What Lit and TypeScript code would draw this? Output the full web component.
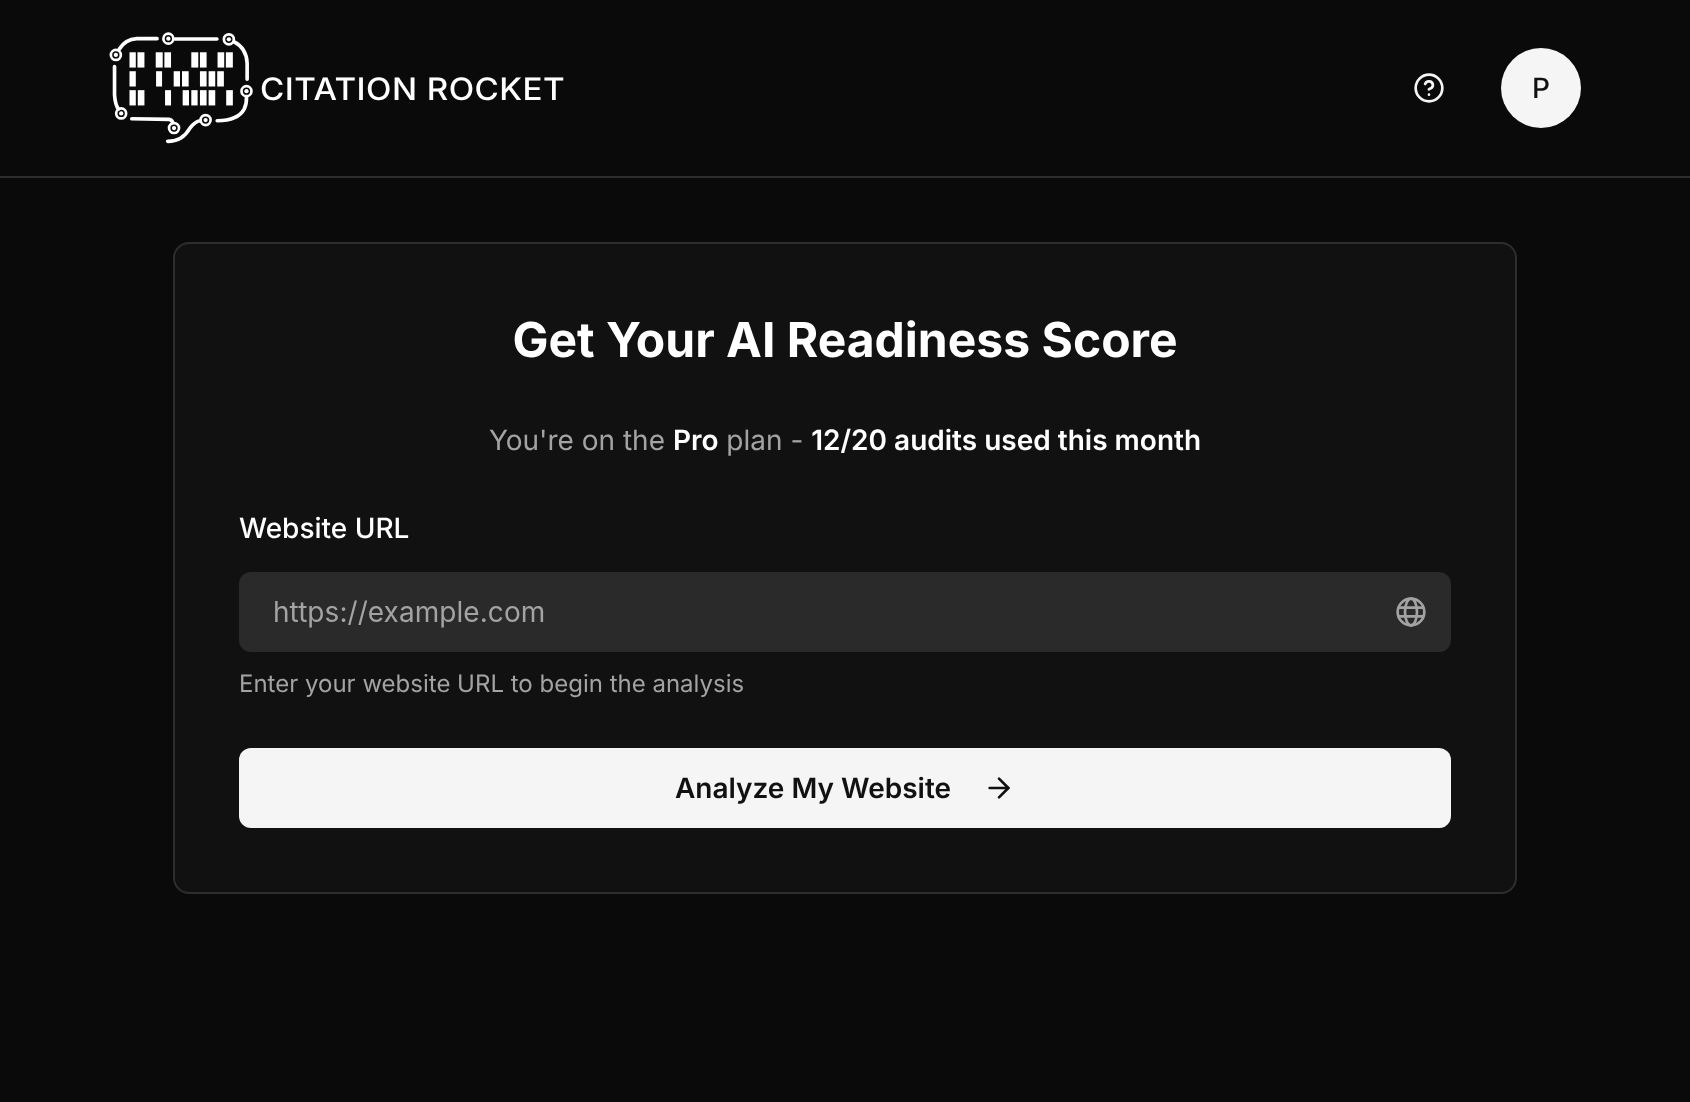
import { LitElement, html, css, svg } from "lit";
import { customElement } from "lit/decorators.js";

const bars: [number, number, number][] = [
  [103,122,97],[127,148,97],[182,203,97],[208,228,97],[289,310,97],[315,335,97],[368,388,97],[393,414,97],
  [103,122,154],[183,201,154],[236,255,154],[261,281,154],[315,335,154],[341,361,154],[367,387,154],
  [103,122,211],[128,148,211],[210,228,211],[263,282,211],[289,308,211],[315,335,211],[341,361,211],[394,414,211],
];
const nodes = [[62,105],[220,56],[402,58],[455,214],[332,301],[237,325],[78,281]];

@customElement("app-root")
export class AppRoot extends LitElement {
  static styles = css`
    :host { display: block; min-height: 1102px; background: #0a0a0a; color: #fff; font-family: Inter, "Liberation Sans", sans-serif; text-rendering: geometricPrecision; }
    header { height: 176px; border-bottom: 2px solid #2e2e2e; display: flex; align-items: center; justify-content: space-between; padding: 0 109px; }
    .brand { display: flex; align-items: center; gap: 7px; will-change: transform; }
    .brand svg { display: block; width: 144px; height: 113px; }
    .brand span { font-family: Inter, sans-serif; font-weight: 500; font-size: 31px; line-height: 40px; padding-top: 2px; letter-spacing: 0.4px; color: #fff; white-space: nowrap; transform: scaleX(1.07); transform-origin: left center; }
    .actions { display: flex; align-items: center; gap: 48px; will-change: transform; }
    .help { width: 48px; height: 48px; display: flex; align-items: center; justify-content: center; color: #f5f5f5; }
    .avatar { width: 80px; height: 80px; border-radius: 50%; background: #f5f5f5; color: #111; display: flex; align-items: center; justify-content: center; font-size: 28px; font-weight: 500; }
    main { display: flex; justify-content: center; padding-top: 64px; }
    .card { box-sizing: border-box; width: 1344px; border: 2px solid #2e2e2e; border-radius: 16px; background: #111; padding: 64px; will-change: transform; }
    h1 { margin: 2px 0 0; text-align: center; font-size: 48px; line-height: 60px; font-weight: 700; }
    .sub { margin: 50px 0 0; text-align: center; font-size: 28px; line-height: 40px; color: #a3a3a3; }
    .sub b { font-weight: 600; color: #fff; }
    label { display: block; margin-top: 48px; font-size: 28px; line-height: 40px; font-weight: 500; }
    .field { margin-top: 24px; height: 80px; border-radius: 12px; background: #2a2a2a; display: flex; align-items: center; gap: 16px; padding: 0 24px 0 34px; }
    input { flex: 1; min-width: 0; padding: 0; border: 0; outline: 0; background: transparent; font: 400 28px Inter, sans-serif; letter-spacing: 0.06px; color: #fff; }
    input::placeholder { color: #a3a3a3; opacity: 1; }
    .globe { color: #a3a3a3; }
    .hint { margin: 16px 0 0; font-size: 24px; line-height: 32px; color: #a3a3a3; }
    button { margin-top: 48px; width: 100%; height: 80px; border: 0; border-radius: 12px; background: #f5f5f5; color: #111; display: flex; align-items: center; justify-content: center; gap: 32px; font: 600 28px Inter, sans-serif; text-rendering: geometricPrecision; }
    svg.i { display: block; flex: none; width: 32px; height: 32px; fill: none; stroke: currentColor; stroke-width: 2; stroke-linecap: round; stroke-linejoin: round; }
  `;

  render() {
    return html`
      <header>
        <div class="brand">
          <svg viewBox="42 36 432 340" fill="none" stroke="#fff" stroke-linecap="round">
            <g stroke-width="11">
              <path d="M72 88Q90 58 125 56L186 56"/>
              <path d="M240 57L366 57"/>
              <path d="M418 66Q455 85 457 130L457 178"/>
              <path d="M455 232Q456 252 448 268Q430 302 367 303"/>
              <path d="M316 303Q300 305 285 325Q262 365 218 365"/>
              <path d="M110 297L222 299Q230 300 233 308"/>
              <path d="M58 140L58 225Q60 255 70 268"/>
            </g>
            ${bars.map(([a, b, y]) => svg`<rect x=${a} y=${y} width=${b - a} height="46" fill="#fff" stroke="none"/>`)}
            ${nodes.map(([x, y]) => svg`<circle cx=${x} cy=${y} r="15" stroke-width="8"/><circle cx=${x} cy=${y} r="6.5" fill="#fff" stroke="none"/>`)}
          </svg>
          <span>CITATION ROCKET</span>
        </div>
        <div class="actions">
          <div class="help">
            <svg class="i" viewBox="0 0 24 24"><circle cx="12" cy="12" r="10"/><path d="M9.09 9a3 3 0 0 1 5.83 1c0 2-3 3-3 3"/><path d="M12 17h.01"/></svg>
          </div>
          <div class="avatar">P</div>
        </div>
      </header>
      <main>
        <section class="card">
          <h1>Get Your AI Readiness Score</h1>
          <p class="sub">You're on the <b>Pro</b> plan - <b>12/20 audits used this month</b></p>
          <label>Website URL</label>
          <div class="field">
            <input type="text" placeholder="https://example.com" />
            <svg class="i globe" viewBox="0 0 24 24"><circle cx="12" cy="12" r="10"/><path d="M2.8 8.7h18.4M2.8 15.3h18.4"/><ellipse cx="12" cy="12" rx="4.5" ry="10"/></svg>
          </div>
          <p class="hint">Enter your website URL to begin the analysis</p>
          <button>
            <span>Analyze My Website</span>
            <svg class="i" viewBox="0 0 24 24"><path d="M5 12h14"/><path d="m12 5 7 7-7 7"/></svg>
          </button>
        </section>
      </main>
    `;
  }
}
